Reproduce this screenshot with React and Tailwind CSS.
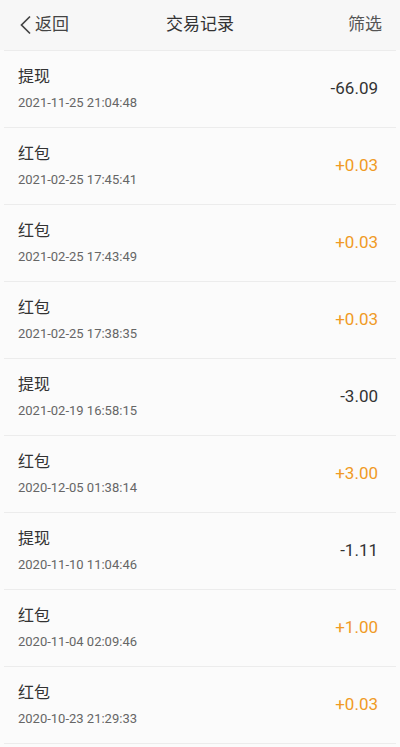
import React from "react";

const records = [
  { title: "提现", time: "2021-11-25 21:04:48", amount: "-66.09" },
  { title: "红包", time: "2021-02-25 17:45:41", amount: "+0.03" },
  { title: "红包", time: "2021-02-25 17:43:49", amount: "+0.03" },
  { title: "红包", time: "2021-02-25 17:38:35", amount: "+0.03" },
  { title: "提现", time: "2021-02-19 16:58:15", amount: "-3.00" },
  { title: "红包", time: "2020-12-05 01:38:14", amount: "+3.00" },
  { title: "提现", time: "2020-11-10 11:04:46", amount: "-1.11" },
  { title: "红包", time: "2020-11-04 02:09:46", amount: "+1.00" },
  { title: "红包", time: "2020-10-23 21:29:33", amount: "+0.03" },
];

const font = { fontFamily: "Roboto, 'Noto Sans CJK SC', sans-serif" };

const App = () => {
  return (
    <div className="w-[400px] h-[747px] bg-[#fbfbfb] overflow-hidden" style={font}>
      <div className="h-[50px] bg-[#f7f7f7] flex items-center justify-between pl-[19px] pr-[18px] relative">
        <div className="flex items-center text-[17px] text-[#444]">
          <svg width="13" height="20" viewBox="0 0 13 20" className="mr-[3px]">
            <path d="M11 1.5 L2.5 10 L11 18.5" fill="none" stroke="#444" strokeWidth="1.7" />
          </svg>
          <span>返回</span>
        </div>
        <div className="absolute left-0 right-0 text-center text-[17px] text-[#333] pointer-events-none">
          交易记录
        </div>
        <span className="text-[17px] text-[#555]">筛选</span>
      </div>
      <div className="mx-[4px] border-t border-[#ececec]">
        {records.map((r, i) => (
          <div
            key={i}
            className="h-[77px] border-b border-[#ececec] flex items-center justify-between pl-[14px] pr-[18px]"
          >
            <div className="flex flex-col">
              <span className="text-[16px] text-[#333] leading-[20px]">{r.title}</span>
              <span className="text-[13px] text-[#666] leading-[16px] mt-[8px]">{r.time}</span>
            </div>
            <span
              className={
                r.amount.startsWith("+")
                  ? "text-[17px] text-[#f09a25]"
                  : "text-[17px] text-[#333]"
              }
            >
              {r.amount}
            </span>
          </div>
        ))}
      </div>
    </div>
  );
};

export default App;
